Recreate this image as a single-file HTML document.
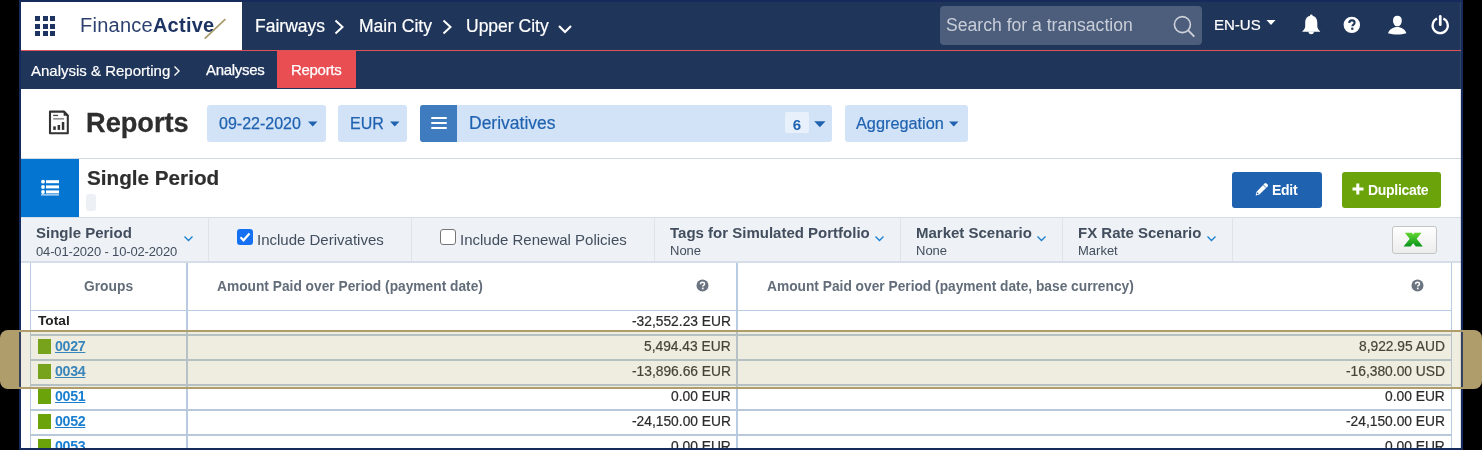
<!DOCTYPE html>
<html><head><meta charset="utf-8">
<style>
*{margin:0;padding:0;box-sizing:border-box;}
html,body{width:1482px;height:450px;overflow:hidden;background:#000;}
body{position:relative;font-family:"Liberation Sans",sans-serif;}
.a{position:absolute;}
.t{position:absolute;white-space:nowrap;line-height:1;will-change:transform;}
.b{font-weight:bold;}
</style></head><body>
<!-- tan highlight behind frame -->
<div class="a" style="left:0;top:330px;width:1482px;height:59px;border-radius:8px;background:#b09d6c;"></div>
<!-- frame -->
<div class="a" style="left:19px;top:0;width:1444px;height:450px;background:#162a5c;"></div>
<div class="a" style="left:21px;top:2px;width:1440px;height:446px;background:#fff;"></div>

<!-- header bar -->
<div class="a" style="left:21px;top:2px;width:1440px;height:48px;background:#1f355a;"></div>
<div class="a" style="left:21px;top:2px;width:221px;height:48px;background:#fff;"></div>
<div class="a" style="left:21px;top:50px;width:1440px;height:1px;background:#e0525a;"></div>
<!-- grid icon -->
<div class="a" style="left:35px;top:16px;width:5px;height:5px;background:#1d3361;box-shadow:8px 0 #1d3361,15px 0 #1d3361,0 8px #1d3361,8px 8px #1d3361,15px 8px #1d3361,0 15px #1d3361,8px 15px #1d3361,15px 15px #1d3361;"></div>
<!-- logo -->
<div class="t" id="logo" style="left:79.5px;top:15px;font-size:20px;color:#2c4170;letter-spacing:0.25px;">Finance<span class="b" style="color:#1d3361;">Active</span></div>
<svg class="a" style="left:200px;top:15px;" width="30" height="28"><line x1="4.7" y1="23.7" x2="25.4" y2="4.1" stroke="#a69868" stroke-width="1.6"/></svg>

<!-- breadcrumbs -->
<div class="t" id="bc" style="left:255px;top:18px;font-size:17.5px;color:#fff;-webkit-text-stroke:0.2px #fff;">Fairways</div>
<svg class="a" style="left:333px;top:18px;" width="14" height="18"><polyline points="2.5,2.5 9.5,9 2.5,15.5" fill="none" stroke="#fff" stroke-width="2"/></svg>
<div class="t" style="left:358.5px;top:18px;font-size:17.5px;color:#fff;-webkit-text-stroke:0.2px #fff;">Main City</div>
<svg class="a" style="left:441px;top:18px;" width="14" height="18"><polyline points="2.5,2.5 9.5,9 2.5,15.5" fill="none" stroke="#fff" stroke-width="2"/></svg>
<div class="t" style="left:465.5px;top:18px;font-size:17.5px;color:#fff;-webkit-text-stroke:0.2px #fff;">Upper City</div>
<svg class="a" style="left:556px;top:20px;" width="18" height="14"><polyline points="3,6 9,12 15,6" fill="none" stroke="#fff" stroke-width="2.2"/></svg>

<!-- search -->
<div class="a" style="left:940px;top:6px;width:262px;height:39px;border-radius:4px;background:#4c5e7c;"></div>
<div class="t" style="left:946px;top:17px;font-size:17.6px;color:#c9ced8;">Search for a transaction</div>
<svg class="a" style="left:1170px;top:13px;" width="30" height="28"><circle cx="12.4" cy="11.6" r="8" fill="none" stroke="#cfd3da" stroke-width="1.6"/><line x1="18.2" y1="17.4" x2="24.3" y2="23.6" stroke="#cfd3da" stroke-width="1.9"/></svg>

<div class="t" style="left:1214px;top:17px;font-size:15px;color:#fff;-webkit-text-stroke:0.2px #fff;">EN-US</div>
<svg class="a" style="left:1265px;top:18px;" width="12" height="9"><polygon points="1.5,2 10.5,2 6,7" fill="#fff"/></svg>

<!-- bell -->
<svg class="a" style="left:1300px;top:13px;" width="23" height="23" viewBox="0 0 23 23"><circle cx="11.3" cy="2.9" r="1.4" fill="#fff"/><path d="M11.3 2.8C15.5 3 17.3 5.8 17.3 10V13.3C17.3 15.4 18.6 17 20.1 18.2V18.7H2.4V18.2C3.9 17 5.2 15.4 5.2 13.3V10C5.2 5.8 7 3 11.3 2.8Z" fill="#fff"/><path d="M8.5 18.5A2.7 2.7 0 0 0 13.9 18.5Z" fill="#fff"/></svg>
<!-- help -->
<svg class="a" style="left:1343px;top:16px;" width="18" height="18" viewBox="0 0 18 18"><circle cx="8.8" cy="8.9" r="8.2" fill="#fff"/><path d="M6.3 6.9c0-1.6 1.1-2.5 2.6-2.5 1.6 0 2.7 0.9 2.7 2.3 0 1.9-2.2 1.9-2.2 3.5" fill="none" stroke="#1f355a" stroke-width="2.1"/><rect x="8.2" y="11.6" width="2.2" height="2.2" fill="#1f355a"/></svg>
<!-- user -->
<svg class="a" style="left:1387px;top:15px;" width="21" height="21" viewBox="0 0 21 21"><path d="M10.4 0.8C13.2 0.8 14.8 2.6 14.8 5.4C14.8 8.6 12.9 11.3 10.4 11.3S6 8.6 6 5.4C6 2.6 7.6 0.8 10.4 0.8Z" fill="#fff"/><path d="M1 18.2C2.5 14.5 6 12.1 10.2 12.1S17.9 14.5 19.4 18.2C16.5 19.1 13.3 19.4 10.2 19.4S3.9 19.1 1 18.2Z" fill="#fff"/></svg>
<!-- power -->
<svg class="a" style="left:1430px;top:13px;" width="22" height="23" viewBox="0 0 22 23"><path d="M7.1 5.6A7.6 7.6 0 1 0 13.3 5.6" fill="none" stroke="#fff" stroke-width="2.2"/><rect x="8.9" y="2" width="2.7" height="11" rx="1.35" fill="#fff"/></svg>

<!-- subnav -->
<div class="a" style="left:21px;top:51px;width:1440px;height:38px;background:#1f355a;"></div>
<div class="a" style="left:277px;top:51px;width:79px;height:37px;background:#e84e52;"></div>
<div class="t" style="left:31px;top:62.6px;font-size:15px;color:#fff;-webkit-text-stroke:0.2px #fff;">Analysis &amp; Reporting</div>
<svg class="a" style="left:172px;top:64px;" width="10" height="14"><polyline points="2.5,2.5 7,7 2.5,11.5" fill="none" stroke="#fff" stroke-width="1.4"/></svg>
<div class="t" style="left:206px;top:61.6px;font-size:15px;letter-spacing:-0.3px;color:#fff;-webkit-text-stroke:0.25px #fff;">Analyses</div>
<div class="t" style="left:291px;top:61.6px;font-size:15px;letter-spacing:-0.3px;color:#fff;-webkit-text-stroke:0.25px #fff;">Reports</div>

<!-- toolbar -->
<svg class="a" style="left:48px;top:109px;" width="22" height="27" viewBox="0 0 22 27"><path d="M2 2.6H16L19.8 6.4V24.2H2Z" fill="none" stroke="#333" stroke-width="2.1" stroke-linejoin="round"/><polygon points="15.6,1.6 20.8,6.8 15.6,6.8" fill="#333"/><rect x="5.2" y="5.8" width="4.8" height="1.3" fill="#444"/><rect x="5.2" y="9.2" width="10.8" height="1.3" fill="#777"/><rect x="5.2" y="17.4" width="2.6" height="3.5" fill="#333"/><rect x="9.6" y="16" width="2.5" height="4.9" fill="#333"/><rect x="13.8" y="13" width="2.5" height="7.9" fill="#333"/></svg>
<div class="t b" style="left:86px;top:109px;font-size:27.2px;color:#2e2e2e;-webkit-text-stroke:0.3px #2e2e2e;">Reports</div>

<div class="a" style="left:207px;top:105px;width:119px;height:37px;border-radius:3px;background:#d3e3f7;"></div>
<div class="t" style="left:219px;top:116px;font-size:16px;color:#1f62b0;-webkit-text-stroke:0.25px #1f62b0;">09-22-2020</div>
<svg class="a" style="left:307px;top:120px;" width="12" height="8"><polygon points="1,1.5 10.5,1.5 5.75,6.5" fill="#1f62b0"/></svg>

<div class="a" style="left:338px;top:105px;width:69px;height:37px;border-radius:3px;background:#d3e3f7;"></div>
<div class="t" style="left:350px;top:116px;font-size:16px;color:#1f62b0;-webkit-text-stroke:0.25px #1f62b0;">EUR</div>
<svg class="a" style="left:389px;top:120px;" width="12" height="8"><polygon points="1,1.5 10.5,1.5 5.75,6.5" fill="#1f62b0"/></svg>

<div class="a" style="left:420px;top:105px;width:412px;height:37px;border-radius:3px;background:#d3e3f7;"></div>
<div class="a" style="left:420px;top:105px;width:37px;height:37px;border-radius:3px 0 0 3px;background:#3f7bbf;"></div>
<div class="a" style="left:431px;top:116.5px;width:15.5px;height:2.7px;border-radius:1.3px;background:#fff;"></div><div class="a" style="left:431px;top:121.5px;width:15.5px;height:2.7px;border-radius:1.3px;background:#fff;"></div><div class="a" style="left:431px;top:126.5px;width:15.5px;height:2.7px;border-radius:1.3px;background:#fff;"></div>
<div class="t" style="left:469px;top:114.5px;font-size:17.5px;color:#1f62b0;-webkit-text-stroke:0.2px #1f62b0;">Derivatives</div>
<div class="a" style="left:785px;top:112px;width:24px;height:21px;border-radius:2px;background:#e8f1fb;"></div>
<div class="t b" style="left:785px;top:116.5px;width:24px;text-align:center;font-size:15px;color:#1f62b0;">6</div>
<svg class="a" style="left:813px;top:119px;" width="14" height="9"><polygon points="1.2,2.2 12.5,2.2 6.85,8.2" fill="#1f62b0"/></svg>

<div class="a" style="left:845px;top:105px;width:123px;height:37px;border-radius:3px;background:#d3e3f7;"></div>
<div class="t" style="left:856px;top:115px;font-size:16.3px;color:#1f62b0;-webkit-text-stroke:0.2px #1f62b0;">Aggregation</div>
<svg class="a" style="left:948px;top:120px;" width="12" height="8"><polygon points="1,1.5 10.5,1.5 5.75,6.5" fill="#1f62b0"/></svg>

<!-- section header -->
<div class="a" style="left:21px;top:158px;width:1440px;height:1px;background:#cfdae5;"></div>
<div class="a" style="left:21px;top:159px;width:58px;height:58px;background:#0575d2;"></div>
<svg class="a" style="left:40px;top:178px;" width="20" height="18" viewBox="0 0 20 18"><circle cx="3" cy="3.7" r="1.9" fill="#fff"/><circle cx="3" cy="9" r="1.9" fill="#fff"/><circle cx="3" cy="14" r="1.9" fill="#fff"/><rect x="6" y="2.2" width="13" height="3" fill="#fff"/><rect x="6" y="7.4" width="13" height="3" fill="#fff"/><rect x="6" y="12.4" width="13" height="3" fill="#fff"/><rect x="1" y="16.4" width="18" height="1" fill="#fff"/></svg>
<div class="t b" style="left:86.5px;top:168px;font-size:20.7px;color:#2e2e2e;-webkit-text-stroke:0.2px #2e2e2e;">Single Period</div>
<div class="a" style="left:86px;top:194px;width:10px;height:17px;border-radius:3px;background:#edf1f5;"></div>

<div class="a" style="left:1232px;top:172px;width:90px;height:36px;border-radius:3px;background:#1f62b0;"></div>
<svg class="a" style="left:1254px;top:182px;" width="15" height="15" viewBox="0 0 15 15"><path d="M10.6 1.4a1.3 1.3 0 0 1 1.8 0l1.2 1.2a1.3 1.3 0 0 1 0 1.8L5.4 12.6 1.6 13.6 2.6 9.8z" fill="#fff"/><path d="M9.3 2.9l2.9 2.9" stroke="#1f62b0" stroke-width="0.8"/><circle cx="3.6" cy="11.4" r="0.8" fill="#1f62b0"/></svg>
<div class="t b" style="left:1272px;top:182.5px;font-size:14px;letter-spacing:-0.3px;color:#fff;">Edit</div>
<div class="a" style="left:1342px;top:172px;width:99px;height:36px;border-radius:3px;background:#6aa30a;"></div>
<svg class="a" style="left:1352px;top:183px;" width="12" height="12"><rect x="4.3" y="0.5" width="3" height="11" fill="#fff"/><rect x="0.5" y="4.5" width="11" height="3" fill="#fff"/></svg>
<div class="t b" style="left:1368px;top:182.5px;font-size:14px;letter-spacing:-0.3px;color:#fff;">Duplicate</div>

<!-- filter bar -->
<div class="a" style="left:21px;top:217px;width:1440px;height:46px;background:#eef1f5;border-top:1px solid #d5dee8;border-bottom:2px solid #d5dee8;"></div>
<div class="a" style="left:208px;top:218px;width:1px;height:43px;background:#dfe4ea;"></div>
<div class="a" style="left:411px;top:218px;width:1px;height:43px;background:#dfe4ea;"></div>
<div class="a" style="left:654px;top:218px;width:1px;height:43px;background:#dfe4ea;"></div>
<div class="a" style="left:900px;top:218px;width:1px;height:43px;background:#dfe4ea;"></div>
<div class="a" style="left:1062px;top:218px;width:1px;height:43px;background:#dfe4ea;"></div>
<div class="a" style="left:1232px;top:218px;width:1px;height:43px;background:#dfe4ea;"></div>

<div class="t b" style="left:36px;top:225px;font-size:15px;color:#424e5e;">Single Period</div>
<div class="t" style="left:36px;top:245px;font-size:13px;letter-spacing:-0.15px;color:#424e5e;">04-01-2020 - 10-02-2020</div>
<svg class="a" style="left:183px;top:235px;" width="11" height="8"><polyline points="1.5,1.5 5.5,5.5 9.5,1.5" fill="none" stroke="#1a7fd0" stroke-width="1.3"/></svg>

<div class="a" style="left:237px;top:229px;width:16px;height:16px;border-radius:3px;background:#1671f2;"></div>
<svg class="a" style="left:237px;top:229px;" width="16" height="16"><polyline points="3.5,8.3 6.5,11.3 12.5,4.5" fill="none" stroke="#fff" stroke-width="2.2"/></svg>
<div class="t" style="left:257px;top:232px;font-size:15px;color:#424e5e;">Include Derivatives</div>
<div class="a" style="left:440px;top:229px;width:16px;height:16px;border-radius:3px;background:#fff;border:1px solid #767676;"></div>
<div class="t" style="left:460px;top:232px;font-size:15px;color:#424e5e;">Include Renewal Policies</div>

<div class="t b" style="left:670px;top:225px;font-size:15px;color:#424e5e;">Tags for Simulated Portfolio</div>
<div class="t" style="left:670px;top:244px;font-size:13px;color:#424e5e;">None</div>
<svg class="a" style="left:874px;top:235px;" width="11" height="8"><polyline points="1.5,1.5 5.5,5.5 9.5,1.5" fill="none" stroke="#1a7fd0" stroke-width="1.3"/></svg>
<div class="t b" style="left:916px;top:225px;font-size:15px;color:#424e5e;">Market Scenario</div>
<div class="t" style="left:916px;top:244px;font-size:13px;color:#424e5e;">None</div>
<svg class="a" style="left:1036px;top:235px;" width="11" height="8"><polyline points="1.5,1.5 5.5,5.5 9.5,1.5" fill="none" stroke="#1a7fd0" stroke-width="1.3"/></svg>
<div class="t b" style="left:1078px;top:225px;font-size:15px;color:#424e5e;">FX Rate Scenario</div>
<div class="t" style="left:1078px;top:244px;font-size:13px;color:#424e5e;">Market</div>
<svg class="a" style="left:1206px;top:235px;" width="11" height="8"><polyline points="1.5,1.5 5.5,5.5 9.5,1.5" fill="none" stroke="#1a7fd0" stroke-width="1.3"/></svg>

<div class="a" style="left:1392px;top:226px;width:45px;height:28px;border-radius:3px;background:linear-gradient(#fff,#ececec);border:1px solid #c4c4c4;"></div>
<svg class="a" style="left:1402px;top:231px;" width="24" height="18" viewBox="0 0 24 18"><defs><linearGradient id="xg" x1="0" y1="0" x2="0" y2="1"><stop offset="0" stop-color="#62d630"/><stop offset="1" stop-color="#08951c"/></linearGradient></defs><polygon points="2.8,1.8 9.8,1.8 11.2,3.53 12.6,1.8 19.6,1.8 14.7,7.86 20.8,15.4 13.8,15.4 11.2,12.19 8.6,15.4 1.6,15.4 7.7,7.86" fill="url(#xg)"/></svg>

<!-- table -->
<div class="a" style="left:30px;top:263px;width:1px;height:185px;background:#b8cbe0;"></div>
<div class="a" style="left:186px;top:263px;width:2px;height:185px;background:#b8cbe0;"></div>
<div class="a" style="left:736px;top:263px;width:2px;height:185px;background:#b8cbe0;"></div>
<div class="a" style="left:1451px;top:263px;width:1px;height:185px;background:#b8cbe0;"></div>
<div class="a" style="left:30px;top:310px;width:1422px;height:1px;background:#b8cbe0;"></div>
<div class="a" style="left:30px;top:334px;width:1422px;height:2px;background:#b6c8da;"></div>
<div class="a" style="left:30px;top:359px;width:1422px;height:2px;background:#b6c8da;"></div>
<div class="a" style="left:30px;top:384px;width:1422px;height:2px;background:#b6c8da;"></div>
<div class="a" style="left:30px;top:409px;width:1422px;height:2px;background:#b6c8da;"></div>
<div class="a" style="left:30px;top:434px;width:1422px;height:2px;background:#b6c8da;"></div>

<div class="t b" style="left:84px;top:280px;font-size:13.8px;color:#636d7a;">Groups</div>
<div class="t b" style="left:217px;top:280px;font-size:13.75px;color:#636d7a;">Amount Paid over Period (payment date)</div>
<svg class="a" style="left:695.6px;top:279.4px;" width="13" height="13" viewBox="0 0 13 13"><circle cx="6.5" cy="6.5" r="6" fill="#6a7380"/><path d="M4.5 5.2c0-1.2 0.8-1.9 2-1.9 1.2 0 2 0.7 2 1.7 0 1.4-1.7 1.4-1.7 2.6" fill="none" stroke="#fff" stroke-width="1.5"/><rect x="5.9" y="8.6" width="1.7" height="1.7" fill="#fff"/></svg>
<div class="t b" style="left:767px;top:280px;font-size:13.75px;color:#636d7a;">Amount Paid over Period (payment date, base currency)</div>
<svg class="a" style="left:1410.6px;top:279.4px;" width="13" height="13" viewBox="0 0 13 13"><circle cx="6.5" cy="6.5" r="6" fill="#6a7380"/><path d="M4.5 5.2c0-1.2 0.8-1.9 2-1.9 1.2 0 2 0.7 2 1.7 0 1.4-1.7 1.4-1.7 2.6" fill="none" stroke="#fff" stroke-width="1.5"/><rect x="5.9" y="8.6" width="1.7" height="1.7" fill="#fff"/></svg>

<div class="t b" style="left:38px;top:314px;font-size:13.7px;color:#222;">Total</div>
<div class="t" style="right:751.5px;top:315px;font-size:13.8px;color:#2b2b2b;-webkit-text-stroke:0.2px #2b2b2b;">-32,552.23 EUR</div>
<div class="a" style="left:38px;top:339px;width:13px;height:15px;background:#6aa30a;"></div>
<div class="t b" style="left:55px;top:339px;font-size:14.2px;letter-spacing:-0.3px;color:#1a7fd0;text-decoration:underline;text-underline-offset:1px;">0027</div>
<div class="t" style="right:751.5px;top:340px;font-size:13.8px;color:#2b2b2b;-webkit-text-stroke:0.2px #2b2b2b;">5,494.43 EUR</div>
<div class="t" style="right:37.5px;top:340px;font-size:13.8px;color:#2b2b2b;-webkit-text-stroke:0.2px #2b2b2b;">8,922.95 AUD</div>
<div class="a" style="left:38px;top:364px;width:13px;height:15px;background:#6aa30a;"></div>
<div class="t b" style="left:55px;top:364px;font-size:14.2px;letter-spacing:-0.3px;color:#1a7fd0;text-decoration:underline;text-underline-offset:1px;">0034</div>
<div class="t" style="right:751.5px;top:365px;font-size:13.8px;color:#2b2b2b;-webkit-text-stroke:0.2px #2b2b2b;">-13,896.66 EUR</div>
<div class="t" style="right:37.5px;top:365px;font-size:13.8px;color:#2b2b2b;-webkit-text-stroke:0.2px #2b2b2b;">-16,380.00 USD</div>
<div class="a" style="left:38px;top:389px;width:13px;height:15px;background:#6aa30a;"></div>
<div class="t b" style="left:55px;top:389px;font-size:14.2px;letter-spacing:-0.3px;color:#1a7fd0;text-decoration:underline;text-underline-offset:1px;">0051</div>
<div class="t" style="right:751.5px;top:390px;font-size:13.8px;color:#2b2b2b;-webkit-text-stroke:0.2px #2b2b2b;">0.00 EUR</div>
<div class="t" style="right:37.5px;top:390px;font-size:13.8px;color:#2b2b2b;-webkit-text-stroke:0.2px #2b2b2b;">0.00 EUR</div>
<div class="a" style="left:38px;top:414px;width:13px;height:15px;background:#6aa30a;"></div>
<div class="t b" style="left:55px;top:414px;font-size:14.2px;letter-spacing:-0.3px;color:#1a7fd0;text-decoration:underline;text-underline-offset:1px;">0052</div>
<div class="t" style="right:751.5px;top:415px;font-size:13.8px;color:#2b2b2b;-webkit-text-stroke:0.2px #2b2b2b;">-24,150.00 EUR</div>
<div class="t" style="right:37.5px;top:415px;font-size:13.8px;color:#2b2b2b;-webkit-text-stroke:0.2px #2b2b2b;">-24,150.00 EUR</div>
<div class="a" style="left:38px;top:439px;width:13px;height:15px;background:#6aa30a;"></div>
<div class="t b" style="left:55px;top:439px;font-size:14.2px;letter-spacing:-0.3px;color:#1a7fd0;text-decoration:underline;text-underline-offset:1px;">0053</div>
<div class="t" style="right:751.5px;top:440px;font-size:13.8px;color:#2b2b2b;-webkit-text-stroke:0.2px #2b2b2b;">0.00 EUR</div>
<div class="t" style="right:37.5px;top:440px;font-size:13.8px;color:#2b2b2b;-webkit-text-stroke:0.2px #2b2b2b;">0.00 EUR</div>

<!-- frame borders on top -->
<div class="a" style="left:19px;top:0;width:1444px;height:2px;background:#162a5c;"></div>
<div class="a" style="left:19px;top:448px;width:1444px;height:2px;background:#162a5c;"></div>
<div class="a" style="left:19px;top:0;width:2px;height:450px;background:#162a5c;"></div>
<div class="a" style="left:1461px;top:0;width:2px;height:450px;background:#162a5c;"></div>
<div class="a" style="left:1460px;top:2px;width:1px;height:446px;background:rgba(120,125,140,0.22);"></div>
<!-- overlay -->
<div class="a" style="left:19px;top:330px;width:1444px;height:59px;border-top:2px solid #b09d6c;border-bottom:2px solid #b09d6c;background:rgba(176,162,100,0.2);"></div>

</body></html>
